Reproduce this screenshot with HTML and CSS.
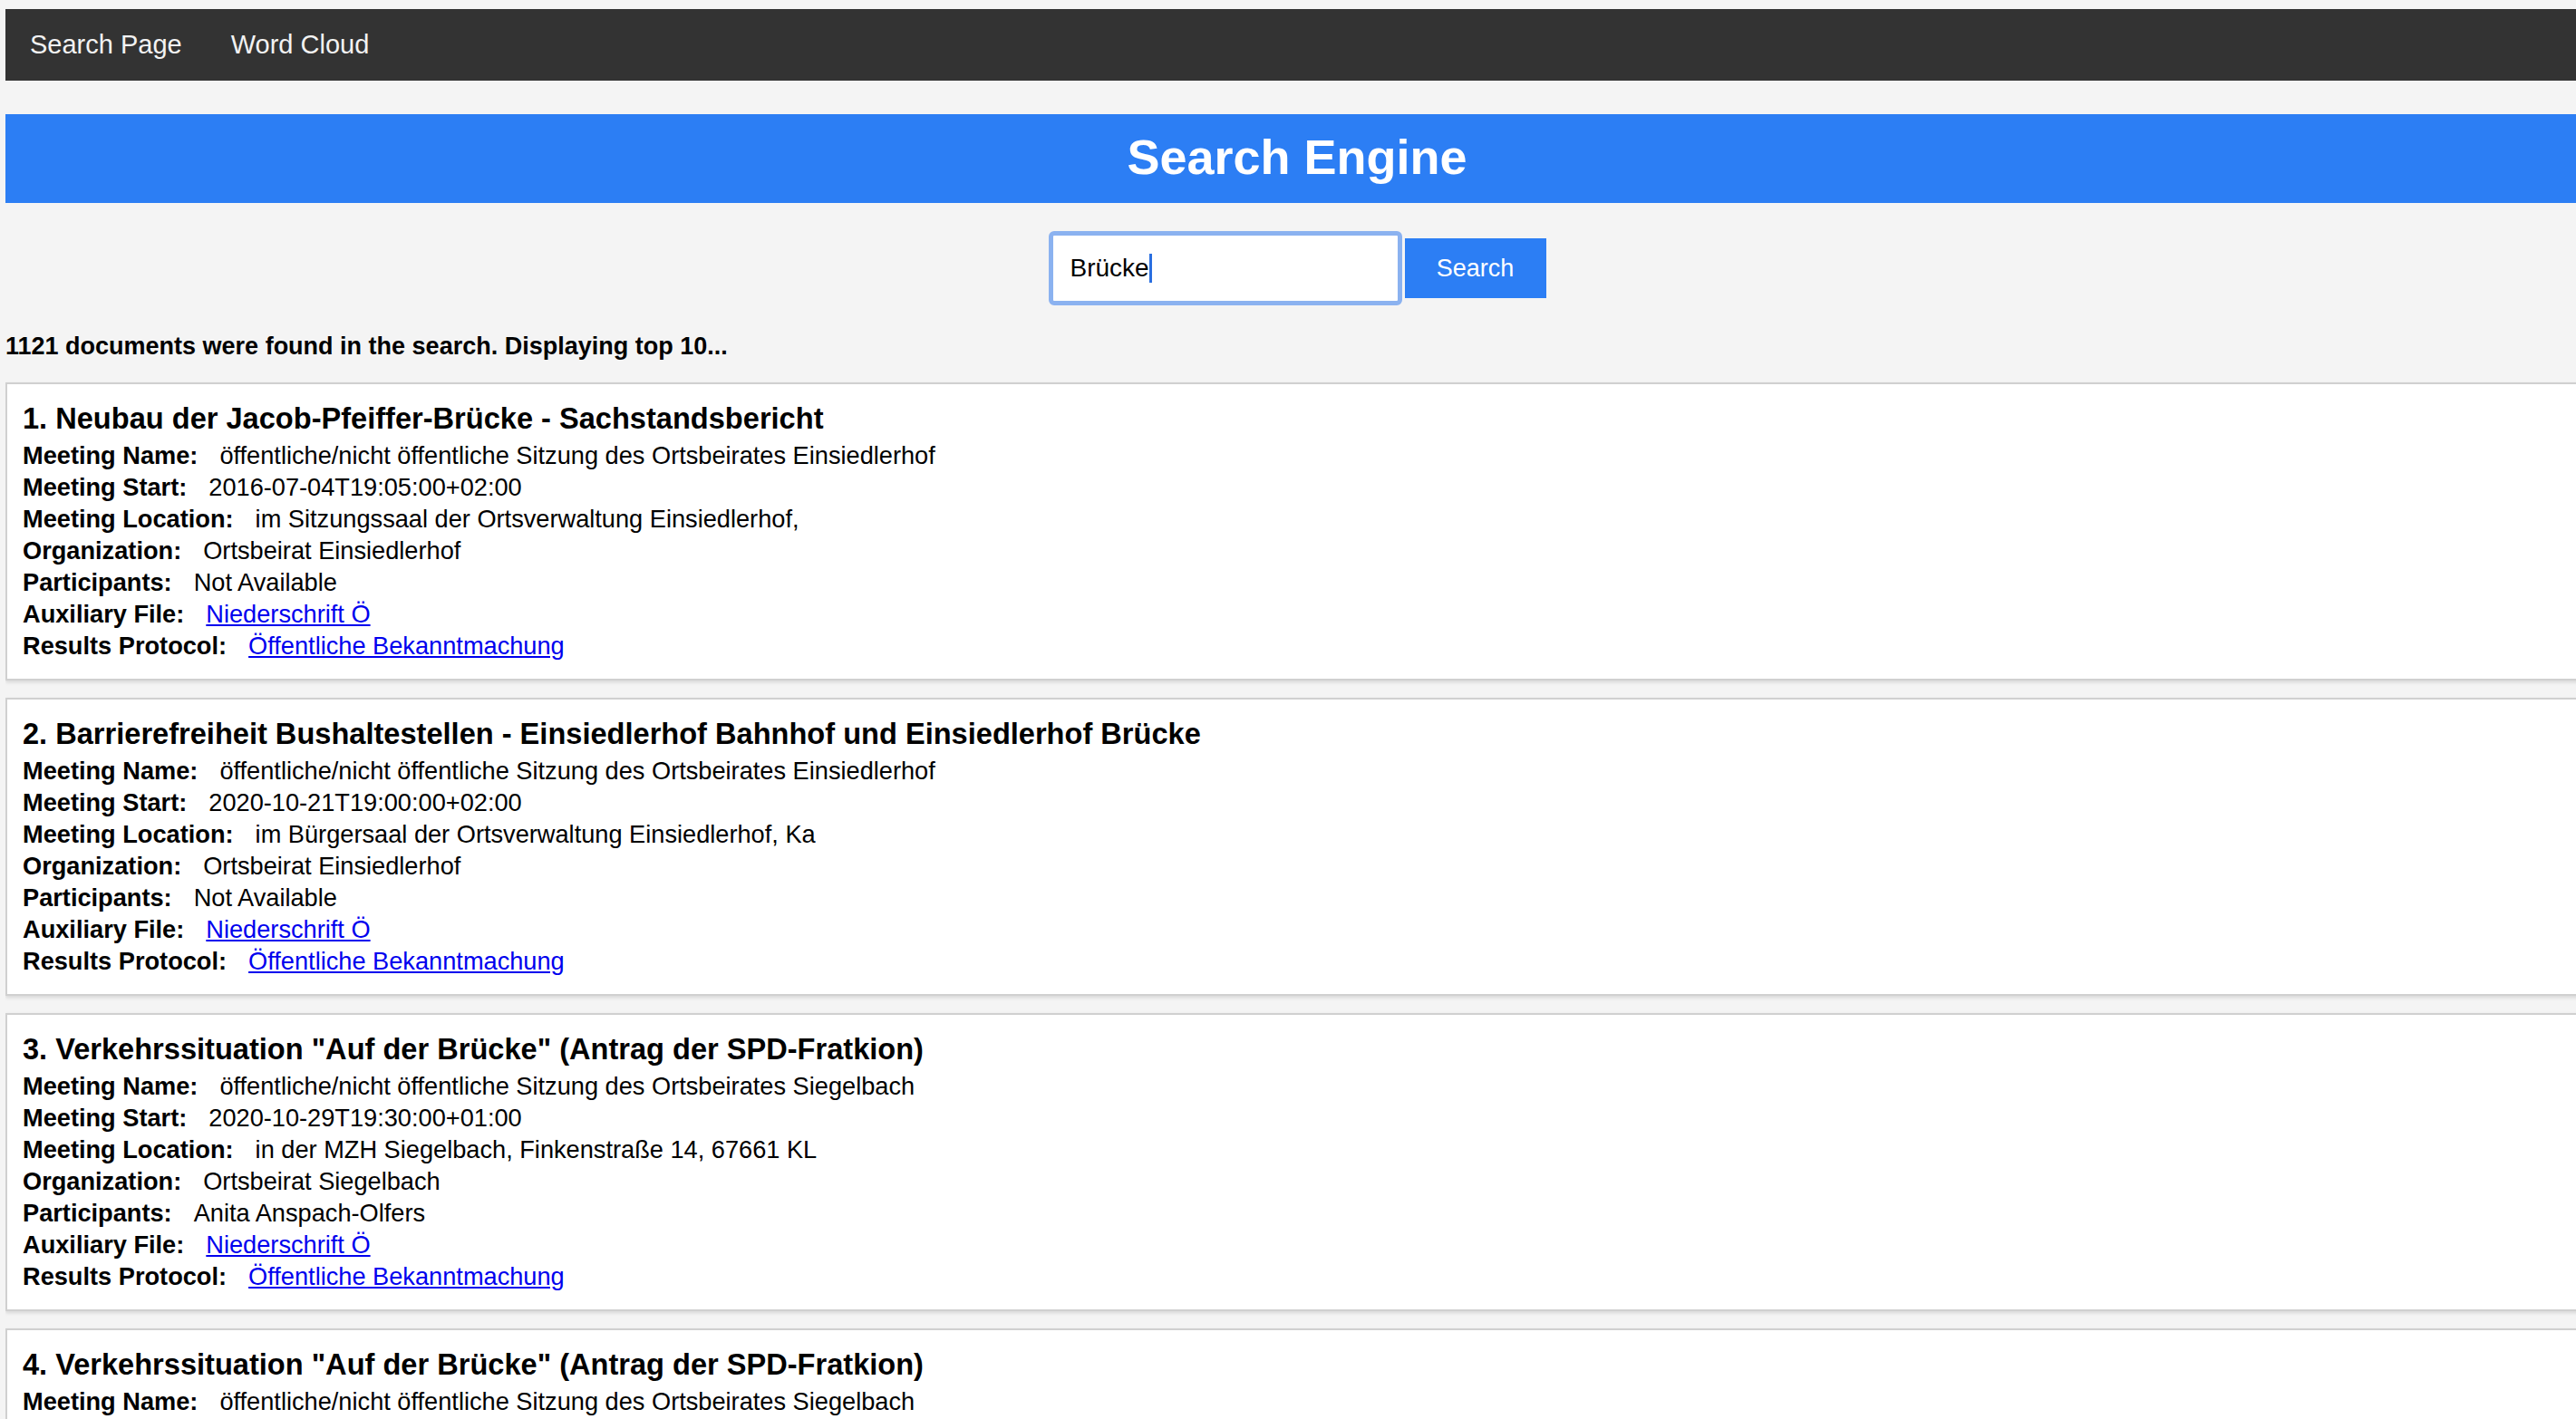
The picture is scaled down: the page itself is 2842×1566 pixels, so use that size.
FILE: index.html
```html
<!DOCTYPE html>
<html lang="de">
<head>
<meta charset="utf-8">
<title>Search Engine</title>
<link rel="stylesheet" href="styles.css">
</head>
<body>
<nav class="navbar">
  <a href="#" class="nav-link">Search Page</a>
  <a href="#" class="nav-link">Word Cloud</a>
</nav>
<header class="banner"><h1 class="banner-title">Search Engine</h1></header>
<form class="search-form">
  <div class="search-input"><span class="search-value">Brücke</span><span class="caret"></span></div>
  <button type="button" class="search-button">Search</button>
</form>
<p class="result-count">1121 documents were found in the search. Displaying top 10...</p>
<div class="results">
  <article class="result-card">
    <h2 class="result-title">1. Neubau der Jacob-Pfeiffer-Brücke - Sachstandsbericht</h2>
    <div class="field"><span class="label">Meeting Name:</span><span class="value">öffentliche/nicht öffentliche Sitzung des Ortsbeirates Einsiedlerhof</span></div>
    <div class="field"><span class="label">Meeting Start:</span><span class="value">2016-07-04T19:05:00+02:00</span></div>
    <div class="field"><span class="label">Meeting Location:</span><span class="value">im Sitzungssaal der Ortsverwaltung Einsiedlerhof,</span></div>
    <div class="field"><span class="label">Organization:</span><span class="value">Ortsbeirat Einsiedlerhof</span></div>
    <div class="field"><span class="label">Participants:</span><span class="value">Not Available</span></div>
    <div class="field"><span class="label">Auxiliary File:</span><a href="#" class="value link">Niederschrift Ö</a></div>
    <div class="field"><span class="label">Results Protocol:</span><a href="#" class="value link">Öffentliche Bekanntmachung</a></div>
  </article>
  <article class="result-card">
    <h2 class="result-title">2. Barrierefreiheit Bushaltestellen - Einsiedlerhof Bahnhof und Einsiedlerhof Brücke</h2>
    <div class="field"><span class="label">Meeting Name:</span><span class="value">öffentliche/nicht öffentliche Sitzung des Ortsbeirates Einsiedlerhof</span></div>
    <div class="field"><span class="label">Meeting Start:</span><span class="value">2020-10-21T19:00:00+02:00</span></div>
    <div class="field"><span class="label">Meeting Location:</span><span class="value">im Bürgersaal der Ortsverwaltung Einsiedlerhof, Ka</span></div>
    <div class="field"><span class="label">Organization:</span><span class="value">Ortsbeirat Einsiedlerhof</span></div>
    <div class="field"><span class="label">Participants:</span><span class="value">Not Available</span></div>
    <div class="field"><span class="label">Auxiliary File:</span><a href="#" class="value link">Niederschrift Ö</a></div>
    <div class="field"><span class="label">Results Protocol:</span><a href="#" class="value link">Öffentliche Bekanntmachung</a></div>
  </article>
  <article class="result-card">
    <h2 class="result-title">3. Verkehrssituation "Auf der Brücke" (Antrag der SPD-Fratkion)</h2>
    <div class="field"><span class="label">Meeting Name:</span><span class="value">öffentliche/nicht öffentliche Sitzung des Ortsbeirates Siegelbach</span></div>
    <div class="field"><span class="label">Meeting Start:</span><span class="value">2020-10-29T19:30:00+01:00</span></div>
    <div class="field"><span class="label">Meeting Location:</span><span class="value">in der MZH Siegelbach, Finkenstraße 14, 67661 KL</span></div>
    <div class="field"><span class="label">Organization:</span><span class="value">Ortsbeirat Siegelbach</span></div>
    <div class="field"><span class="label">Participants:</span><span class="value">Anita Anspach-Olfers</span></div>
    <div class="field"><span class="label">Auxiliary File:</span><a href="#" class="value link">Niederschrift Ö</a></div>
    <div class="field"><span class="label">Results Protocol:</span><a href="#" class="value link">Öffentliche Bekanntmachung</a></div>
  </article>
  <article class="result-card">
    <h2 class="result-title">4. Verkehrssituation "Auf der Brücke" (Antrag der SPD-Fratkion)</h2>
    <div class="field"><span class="label">Meeting Name:</span><span class="value">öffentliche/nicht öffentliche Sitzung des Ortsbeirates Siegelbach</span></div>
    <div class="field"><span class="label">Meeting Start:</span><span class="value">2020-10-29T19:30:00+01:00</span></div>
    <div class="field"><span class="label">Meeting Location:</span><span class="value">in der MZH Siegelbach, Finkenstraße 14, 67661 KL</span></div>
    <div class="field"><span class="label">Organization:</span><span class="value">Ortsbeirat Siegelbach</span></div>
    <div class="field"><span class="label">Participants:</span><span class="value">Anita Anspach-Olfers</span></div>
    <div class="field"><span class="label">Auxiliary File:</span><a href="#" class="value link">Niederschrift Ö</a></div>
    <div class="field"><span class="label">Results Protocol:</span><a href="#" class="value link">Öffentliche Bekanntmachung</a></div>
  </article>
</div>
</body>
</html>
```

FILE: styles.css
```css
html {
  overflow: hidden;
  background: #f4f4f4;
}

body {
  margin: 10px -14px 0 6px;
  font-family: "Liberation Sans", Arial, Helvetica, sans-serif;
  color: #000;
  background: #f4f4f4;
}

.navbar {
  display: flex;
  align-items: center;
  height: 79px;
  background: #333333;
}

.nav-link {
  color: #f2f2f2;
  text-decoration: none;
  font-size: 29px;
  line-height: 29px;
  padding: 25px 27px;
}

.banner {
  margin-top: 37px;
  padding: 16px 0 20px;
  background: #2c7ef4;
  text-align: center;
}

.banner-title {
  margin: 0;
  font-size: 54px;
  line-height: 62px;
  font-weight: bold;
  color: #ffffff;
}

.search-form {
  display: flex;
  justify-content: center;
  align-items: center;
  gap: 3px;
  margin: 31px 0 0;
}

.search-input {
  box-sizing: border-box;
  display: flex;
  align-items: center;
  width: 390px;
  height: 82px;
  padding-left: 19px;
  border: 5px solid #8bb2f0;
  border-radius: 6px;
  background: #ffffff;
  font-size: 28px;
  color: #000;
}

.caret {
  width: 3px;
  height: 32px;
  background: #2a6fe0;
}

.search-button {
  width: 156px;
  height: 66px;
  padding: 0;
  border: none;
  background: #2c7ef4;
  color: #ffffff;
  font-family: "Liberation Sans", Arial, Helvetica, sans-serif;
  font-size: 27px;
}

.result-count {
  margin: 30px 0 24px;
  font-size: 27px;
  line-height: 31px;
  font-weight: bold;
}

.result-card {
  background: #ffffff;
  border: 2px solid #d0d0d0;
  box-shadow: 0 2px 4px rgba(0, 0, 0, 0.12);
  padding: 19px 18px 19px 17px;
  margin-bottom: 19px;
}

.result-title {
  margin: 0 0 4px;
  font-size: 32.6px;
  line-height: 38px;
  font-weight: bold;
}

.field {
  font-size: 27.2px;
  line-height: 35px;
  white-space: nowrap;
}

.label {
  font-weight: bold;
  margin-right: 24px;
}

.link {
  color: #0000ee;
  text-decoration: underline;
}
```
